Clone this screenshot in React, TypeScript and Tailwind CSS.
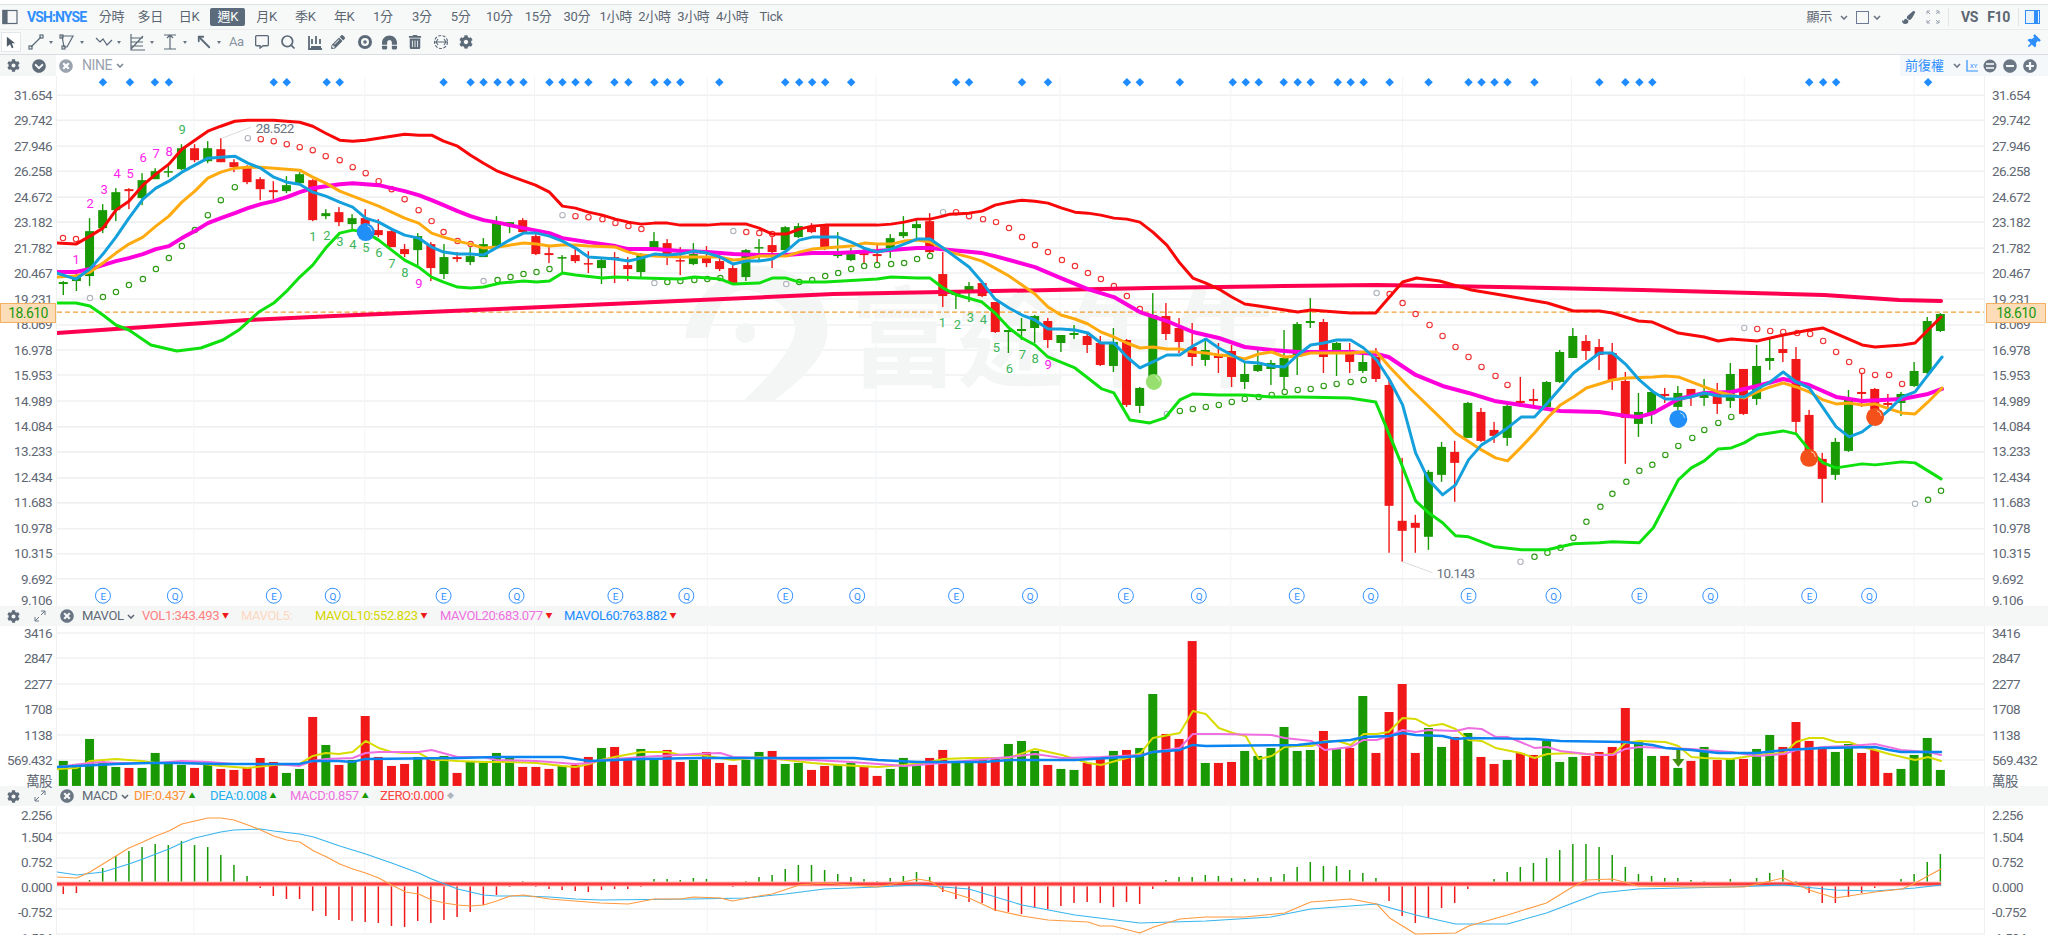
import { ReactNode } from "react";
import { Search, MoveUpLeft } from "lucide-react";
import {
  FaCog,
  FaTimesCircle,
  FaThumbtack,
  FaPaintBrush,
  FaPlusCircle,
  FaMinusCircle,
  FaTrashAlt,
  FaMagnet,
  FaRegCommentAlt,
  FaPencilAlt,
  FaChevronCircleDown,
} from "react-icons/fa";

// [green?, wick top, body top, body bottom, wick bottom], page y pixels
const candles: number[][] = [
  [1,281,282,284,295],[1,273,277,281,291],[1,218,231,276,286],[1,204,210,228,233],[1,188,192,210,221],[0,188,189,191,209],[1,173,180,198,205],[1,168,171,179,179],[1,165,171,172,177],[1,144,148,169,170],
  [0,144,148,160,162],[1,141,148,161,163],[0,138,149,162,162],[0,159,162,167,172],[0,165,167,182,184],[0,177,179,189,200],[0,181,190,192,199],[1,176,185,191,193],[1,172,174,183,183],[0,179,180,220,221],
  [1,209,213,216,219],[0,207,212,222,226],[1,214,218,224,229],[0,209,218,227,230],[0,219,230,235,237],[0,230,231,247,247],[0,244,249,254,257],[1,233,236,250,265],[0,242,244,268,281],[1,244,257,274,279],
  [0,252,257,259,262],[1,247,256,262,265],[1,238,244,257,257],[1,216,222,246,246],[1,222,222,224,233],[0,218,220,232,234],[0,233,236,254,255],[0,247,253,255,263],[1,255,257,258,272],[0,248,255,261,263],
  [0,251,263,264,273],[1,258,260,268,284],[0,252,257,259,283],[0,257,265,269,281],[1,253,255,272,277],[1,232,241,249,250],[0,239,243,256,265],[0,247,260,261,275],[1,243,254,264,265],[0,246,257,263,267],
  [0,255,261,269,271],[0,265,268,283,283],[1,249,250,277,281],[1,239,247,248,260],[0,237,245,252,268],[1,226,227,250,250],[1,223,226,237,238],[0,223,226,232,233],[0,225,226,248,250],[1,232,254,256,258],
  [1,248,254,260,261],[0,247,253,255,265],[0,243,254,256,264],[1,234,238,248,258],[1,216,232,236,238],[1,220,224,228,239],[0,213,221,252,253],[0,252,274,296,307],[1,292,293,295,309],[1,282,286,290,302],
  [0,283,283,296,297],[0,302,302,332,333],[1,330,330,332,353],[1,318,329,331,340],[1,315,316,328,343],[0,318,321,340,348],[1,335,335,343,352],[1,325,333,335,339],[0,332,336,345,353],[0,336,343,365,366],
  [1,328,342,366,372],[0,339,340,405,407],[1,387,388,406,413],[1,293,315,377,380],[0,303,316,334,340],[0,318,328,342,353],[0,323,347,357,366],[1,338,350,360,366],[0,343,356,358,373],[0,345,351,377,387],
  [1,363,374,382,389],[1,347,365,371,372],[1,360,363,369,385],[1,330,358,377,390],[1,322,324,357,375],[1,298,321,323,328],[0,319,322,357,373],[1,342,343,352,376],[0,343,350,362,373],[1,352,362,371,373],
  [0,348,357,379,382],[0,377,385,506,553],[0,458,521,531,562],[0,515,523,528,553],[1,470,472,537,550],[1,442,447,475,482],[0,441,452,463,502],[1,402,403,438,438],[0,408,412,441,442],[0,422,430,436,443],
  [1,403,406,438,446],[0,377,401,403,407],[0,389,399,401,406],[1,381,382,407,407],[1,350,352,382,383],[1,328,336,358,358],[0,335,341,351,360],[0,339,347,355,370],[0,343,353,380,390],[0,372,381,418,464],
  [1,393,412,424,437],[1,391,392,414,424],[0,388,394,396,403],[1,386,393,407,410],[0,389,389,397,406],[1,379,393,398,406],[0,383,393,404,414],[1,363,374,401,408],[0,369,369,414,415],[1,345,366,399,405],
  [1,339,358,361,370],[0,335,349,353,362],[0,347,359,422,433],[0,410,415,460,460],[0,453,459,479,503],[1,438,442,475,480],[1,390,400,451,452],[0,370,392,394,407],[0,388,389,413,423],[0,394,403,405,412],
  [1,392,394,403,416],[1,362,371,386,387],[1,317,321,373,374],[1,313,314,331,332],
];

const volTops = [
  761,764,739,763,767,768,768,753,763,765,768,765,769,770,767,758,762,773,769,717,745,765,760,716,757,766,764,757,758,756,
  773,762,763,753,758,767,767,769,766,765,757,748,747,760,749,760,750,762,760,752,
  763,765,760,752,751,764,763,770,766,765,763,766,776,769,758,761,758,750,761,762,759,759,744,741,751,765,769,770,763,758,751,750,748,694,734,739,641,763,763,762,751,756,748,727,751,750,731,749,748,696,753,712,
  684,753,728,747,737,733,757,764,760,753,755,741,762,757,756,752,747,708,742,756,756,768,761,747,760,759,759,749,735,747,722,741,748,752,744,753,750,773,769,755,738,770,
];

const macdTops = [
  894,893,880,868,856,851,847,844,845,841,845,847,855,865,876,888,896,899,899,911,916,920,921,922,923,926,927,921,923,920,917,912,905,895,887,881,887,889,890,891,892,
  890,889,889,887,879,879,880,878,879,882,887,881,877,875,869,865,865,870,874,877,879,881,878,876,872,877,892,899,902,903,911,912,914,908,909,906,903,902,903,907,902,904,889,880,877,877,875,876,878,879,878,877,874,867,862,866,866,870,873,878,901,916,923,918,908,903,889,885,879,872,867,863,858,850,844,844,847,855,867,874,876,878,878,880,881,883,879,884,878,873,870,881,893,903,903,897,893,888,883,879,874,862,854,
];

const candleX = (i: number) => 62.3 + 13.14 * i;

const lineRed = "56,243 75,244 89,236 102,228 115,210 128,201 142,185 155,174 168,164 181,149 194,140 207,131 220,126 234,121 247,120 273,120 299,122 312,126 325,133 339,140 352,141 365,140 378,138 391,136 404,134 418,135 431,135 443,141 457,146 470,155 483,163 497,171 510,176 535,185 549,192 562,206 575,208 588,212 602,215 615,219 628,222 641,224 654,223 667,223 680,225 707,225 720,224 733,224 746,224 759,228 772,234 786,234 799,229 812,226 825,225 877,225 891,224 904,222 917,219 930,219 943,216 950,214 969,213 982,211 995,205 1009,202 1022,200 1035,201 1048,203 1062,208 1075,212 1088,213 1101,215 1114,218 1127,219 1140,222 1153,232 1167,245 1180,263 1193,278 1206,283 1219,289 1232,297 1245,304 1259,306 1272,308 1285,310 1298,312 1311,310 1324,311 1337,312 1351,313 1364,313 1376,313 1389,298 1403,282 1417,278 1440,281 1472,290 1508,296 1548,303 1574,311 1600,311 1613,313 1639,321 1653,322 1679,333 1705,337 1719,341 1732,339 1758,341 1784,335 1810,330 1824,328 1863,345 1876,347 1903,345 1916,343 1942,317";
const lineBlue = "56,273 75,279 89,269 102,254 115,237 128,218 142,199 155,188 168,181 181,172 194,165 207,158 220,157 234,156 247,163 260,168 273,177 286,182 299,184 312,192 325,196 339,202 352,207 365,218 378,222 391,229 404,235 418,238 431,247 443,252 457,254 470,254 483,255 497,247 509,240 523,233 536,233 549,236 562,241 575,248 588,257 602,258 615,259 628,261 641,258 654,254 667,255 680,254 694,251 707,253 720,257 733,264 746,261 759,261 772,259 786,251 799,240 812,237 825,237 838,237 851,242 864,248 877,252 891,249 904,244 917,239 930,239 943,248 950,253 969,267 982,282 995,299 1009,308 1022,315 1035,320 1048,329 1061,329 1075,330 1088,333 1101,343 1114,343 1127,357 1140,368 1153,362 1167,355 1180,355 1193,346 1206,339 1219,348 1232,355 1245,362 1259,363 1272,366 1285,367 1298,355 1311,345 1324,343 1337,340 1351,340 1364,348 1377,360 1390,380 1403,405 1416,453 1429,480 1443,495 1456,485 1469,460 1482,445 1495,437 1508,428 1522,417 1535,417 1548,403 1561,388 1574,373 1587,363 1600,353 1613,353 1627,365 1640,380 1654,392 1666,399 1679,399 1692,397 1705,393 1719,396 1732,396 1745,397 1758,389 1771,382 1784,372 1797,382 1810,388 1824,408 1837,427 1850,437 1863,432 1876,422 1890,410 1903,397 1916,392 1929,375 1943,357";
const lineOrange = "56,277 75,276 89,272 102,263 115,253 128,244 142,237 155,226 168,216 181,202 194,191 207,178 220,172 234,168 247,167 260,167 273,168 286,169 299,170 312,177 325,183 339,191 352,196 365,201 378,206 391,212 404,218 418,223 431,233 443,237 457,241 470,244 483,248 497,247 510,245 523,243 536,244 549,246 562,245 575,245 588,246 615,247 628,252 641,255 654,256 680,257 707,257 720,257 733,260 746,259 759,256 772,256 786,256 799,252 812,249 838,247 851,246 864,243 877,244 891,244 904,241 917,240 930,242 943,248 950,252 969,257 982,261 995,268 1009,276 1022,285 1035,294 1048,307 1061,315 1075,319 1088,324 1101,332 1114,337 1127,343 1140,348 1153,347 1167,349 1180,349 1193,352 1206,353 1219,355 1232,356 1245,359 1259,354 1272,352 1285,357 1298,356 1311,353 1324,353 1351,353 1364,352 1377,352 1390,367 1410,388 1443,420 1456,433 1482,450 1496,458 1508,461 1522,447 1535,433 1548,418 1561,405 1574,397 1587,388 1600,384 1613,380 1627,378 1654,377 1666,376 1679,377 1692,382 1705,387 1719,392 1732,395 1745,398 1758,392 1771,387 1784,383 1797,387 1810,392 1824,400 1837,404 1850,403 1863,405 1876,404 1890,409 1903,413 1916,414 1929,402 1943,388";
const lineMagenta = "56,272 75,272 89,269 102,265 115,261 128,258 142,254 155,249 168,246 181,238 194,231 207,223 220,218 234,213 247,208 260,204 273,201 286,197 299,192 312,188 325,186 339,184 352,183 365,184 378,185 391,188 404,191 418,195 431,200 443,205 457,211 470,216 483,220 500,223 523,228 549,233 562,238 588,242 615,246 628,249 654,249 680,251 707,252 733,254 759,255 786,255 812,253 838,253 877,251 917,248 930,248 950,250 982,253 995,256 1035,267 1061,278 1088,289 1114,297 1140,312 1167,321 1193,332 1219,338 1245,347 1272,350 1298,352 1324,352 1351,352 1377,354 1389,357 1416,375 1443,386 1469,393 1495,401 1535,407 1561,411 1600,412 1627,416 1640,417 1654,413 1679,399 1705,393 1732,392 1758,386 1784,379 1810,385 1837,397 1863,401 1903,399 1929,394 1943,389";
const lineGreen = "56,303 75,303 89,306 102,315 115,325 128,330 150,345 176,351 200,348 222,340 238,330 258,312 273,303 287,290 299,277 312,265 325,248 339,233 352,230 365,232 378,240 391,250 404,260 418,267 431,277 443,282 457,287 470,288 483,287 500,283 523,281 536,282 549,281 562,273 575,275 602,278 615,277 641,278 680,279 694,277 720,279 733,284 759,283 772,278 786,278 799,282 825,282 877,279 891,277 917,278 930,278 943,288 957,295 982,302 995,313 1009,328 1022,338 1035,345 1048,357 1075,368 1088,378 1102,389 1114,393 1130,420 1150,423 1165,418 1180,400 1193,394 1219,395 1245,395 1272,397 1300,397 1350,398 1376,402 1389,433 1403,467 1416,501 1429,513 1443,523 1456,536 1469,537 1482,542 1495,547 1522,550 1548,550 1561,547 1574,544 1600,543 1613,542 1640,543 1654,528 1666,505 1679,480 1692,468 1705,461 1719,449 1732,448 1745,443 1758,435 1784,431 1797,434 1810,450 1824,463 1837,468 1863,464 1876,465 1903,462 1916,463 1942,479";
const lineCrimson = "56,333 100,330 247,320 333,316 520,308 700,300 833,294 943,292 1150,288 1283,286 1377,285 1500,287 1643,290 1825,295 1900,300 1942,301";

const volYellow = "56,769 76,768 89,761 115,759 141,761 155,763 194,763 220,766 247,768 273,765 299,764 312,756 325,753 338,754 352,752 365,741 378,748 391,752 404,753 418,753 431,760 443,760 457,761 483,762 510,762 536,763 562,766 575,767 589,764 601,760 614,757 641,752 667,752 680,755 700,755 733,760 759,757 812,763 838,765 878,767 904,765 930,762 943,759 970,758 1009,758 1035,749 1062,755 1088,763 1101,765 1127,758 1141,753 1153,738 1180,733 1193,711 1206,714 1219,728 1233,733 1246,736 1259,759 1272,756 1285,747 1298,746 1312,746 1325,741 1338,741 1351,745 1364,734 1377,734 1389,732 1403,718 1416,719 1429,726 1443,724 1456,729 1469,740 1482,741 1496,748 1521,753 1535,758 1548,754 1574,753 1600,755 1614,754 1626,743 1640,741 1666,742 1679,746 1692,757 1705,758 1732,759 1758,755 1785,753 1797,742 1810,738 1824,738 1837,742 1850,742 1863,747 1876,750 1890,754 1916,760 1929,757 1942,761";
const volPink = "56,767 89,763 102,762 115,763 155,763 181,761 208,762 234,764 273,764 299,766 312,761 325,759 352,758 365,753 378,752 418,752 431,750 457,757 483,757 496,760 536,761 575,764 589,763 601,760 641,757 693,754 720,753 733,757 812,760 851,762 904,766 943,763 1009,757 1035,754 1062,758 1101,757 1141,755 1153,752 1180,748 1193,734 1219,734 1272,735 1285,738 1312,741 1325,750 1351,747 1364,740 1377,740 1390,736 1403,730 1416,732 1429,730 1456,731 1469,728 1482,729 1496,737 1508,737 1521,742 1535,748 1548,747 1561,751 1587,754 1600,755 1614,755 1626,749 1640,747 1666,748 1692,749 1732,752 1758,756 1785,754 1797,750 1824,747 1850,746 1876,744 1902,750 1929,752 1942,755";
const volBlue = "56,767 115,764 148,763 174,763 220,764 299,764 312,761 338,761 352,762 365,759 457,758 496,757 562,757 589,761 641,759 700,758 854,758 878,760 917,762 983,762 1009,760 1075,760 1141,756 1153,752 1180,750 1193,745 1206,746 1298,745 1325,742 1351,740 1364,737 1390,736 1403,733 1416,735 1443,736 1456,739 1469,738 1535,739 1561,741 1626,742 1653,745 1666,748 1692,750 1719,753 1758,753 1785,750 1824,748 1876,747 1890,750 1902,752 1942,752";

const macdOrange = "56,877 76,878 89,872 102,864 115,856 128,848 142,842 155,836 168,831 181,824 194,821 207,818 220,818 233,820 247,825 260,830 273,836 286,840 299,842 313,851 326,857 339,864 352,869 365,873 378,878 391,885 405,892 418,894 431,900 444,903 457,905 470,906 483,905 496,901 510,896 523,895 536,897 549,899 574,901 600,903 628,904 654,899 680,899 693,897 720,898 732,901 759,896 772,894 799,885 824,883 864,886 877,887 903,882 917,879 930,881 943,890 969,898 995,910 1022,916 1048,920 1088,922 1100,926 1113,926 1140,933 1154,927 1180,919 1206,917 1245,917 1285,913 1311,902 1351,899 1377,904 1390,918 1416,934 1456,933 1469,926 1508,915 1547,903 1573,887 1587,880 1613,879 1639,886 1691,887 1745,887 1784,878 1810,890 1836,898 1876,892 1903,889 1916,883 1942,869";
const macdBlue = "56,872 76,875 102,872 115,868 128,864 142,859 155,854 168,849 181,843 194,838 207,835 220,832 233,830 260,829 273,831 299,834 313,837 339,846 365,854 391,863 418,873 431,879 444,884 457,889 470,892 483,895 496,896 523,896 549,897 575,899 600,900 692,899 745,898 785,894 824,889 877,887 917,885 969,889 1022,905 1075,915 1140,923 1206,921 1271,917 1311,909 1377,904 1416,915 1456,924 1508,924 1547,913 1600,893 1639,889 1731,887 1784,885 1836,890 1876,891 1916,888 1942,885";

// SAR dots, 0 gray / 1 green / 2 red
const sar: number[][] = [
  [62,238,2],[75,239,2],[89,298,0],[102,297,1],[115,292,1],[128,285,1],[142,279,1],[155,269,1],[168,258,1],[181,246,1],[194,230,1],[207,215,1],[220,200,1],[234,187,1],
  [247,138,0],[260,139,2],[273,141,2],[286,144,2],[299,147,2],[312,150,2],[325,156,2],[339,160,2],[352,167,2],[365,173,2],[378,181,2],[391,189,2],[404,199,2],[418,210,2],[431,221,2],[443,232,2],[457,241,2],[470,244,2],
  [483,281,0],[497,280,1],[510,277,1],[523,274,1],[536,272,1],[549,269,1],[562,215,0],[575,216,2],[588,217,2],[602,219,2],[615,223,2],[628,226,2],[641,229,2],
  [654,283,0],[667,282,1],[680,281,1],[694,280,1],[707,279,1],[720,278,1],[733,231,0],[746,232,2],[759,233,2],[772,234,2],
  [786,284,0],[799,282,1],[812,280,1],[825,276,1],[838,273,1],[851,269,1],[864,266,1],[877,265,1],[891,264,1],[904,263,1],[917,259,1],[930,256,1],
  [943,212,0],[956,212,2],[969,216,2],[983,219,2],[996,222,2],[1009,228,2],[1022,237,2],[1035,245,2],[1048,252,2],[1062,260,2],[1075,266,2],[1088,273,2],[1101,279,2],[1114,286,2],[1127,296,2],[1140,309,2],
  [1167,414,0],[1180,411,1],[1193,409,1],[1206,407,1],[1219,405,1],[1232,402,1],[1245,399,1],[1259,397,1],[1272,395,1],[1285,392,1],[1298,390,1],[1311,389,1],[1324,386,1],[1337,384,1],[1351,382,1],[1364,380,1],
  [1377,293,0],[1390,294,2],[1403,303,2],[1416,314,2],[1430,325,2],[1443,336,2],[1456,347,2],[1469,357,2],[1482,367,2],[1496,376,2],[1508,385,2],
  [1521,562,0],[1535,557,1],[1548,553,1],[1561,548,1],[1574,538,1],[1587,522,1],[1601,507,1],[1613,494,1],[1627,482,1],[1640,471,1],[1653,465,1],[1666,455,1],[1679,446,1],[1693,438,1],[1705,430,1],[1719,423,1],[1732,417,1],
  [1745,328,0],[1758,329,2],[1771,331,2],[1784,332,2],[1798,333,2],[1811,334,2],[1824,341,2],[1837,352,2],[1850,362,2],[1863,371,2],[1876,375,2],[1890,375,2],[1903,384,2],
  [1916,504,0],[1929,500,1],[1942,491,1],
];
const sarColor = ["#b0b4bc", "#2a9a10", "#f03030"];

const diamonds = [102,129,154,168,273,286,326,339,443,470,483,497,510,523,549,562,575,588,614,628,654,667,680,719,785,799,812,825,851,956,969,1022,1048,1127,1140,1180,1233,1246,1259,1284,1298,1311,1338,1351,1364,1390,1429,1469,1482,1495,1508,1535,1600,1626,1640,1653,1810,1824,1837,1929];

const events: [number, string][] = [[102,"E"],[174,"Q"],[273,"E"],[332,"Q"],[443,"E"],[516,"Q"],[615,"E"],[686,"Q"],[785,"E"],[857,"Q"],[956,"E"],[1030,"Q"],[1126,"E"],[1199,"Q"],[1297,"E"],[1371,"Q"],[1469,"E"],[1554,"Q"],[1640,"E"],[1711,"Q"],[1810,"E"],[1870,"Q"]];

const tdLabels: [number, number, string, string][] = [
  [75,259,"1","#ff22ee"],[89,203,"2","#ff22ee"],[103,189,"3","#ff22ee"],[116,173,"4","#ff22ee"],[129,173,"5","#ff22ee"],[142,157,"6","#ff22ee"],[155,153,"7","#ff22ee"],[168,151,"8","#ff22ee"],[181,129,"9","#3cb55a"],
  [312,236,"1","#3cb55a"],[326,235,"2","#3cb55a"],[339,241,"3","#3cb55a"],[352,244,"4","#3cb55a"],[365,247,"5","#3cb55a"],[378,252,"6","#3cb55a"],[391,263,"7","#3cb55a"],[404,272,"8","#3cb55a"],[418,283,"9","#ff22ee"],
  [942,322,"1","#3cb55a"],[957,324,"2","#3cb55a"],[970,317,"3","#3cb55a"],[983,319,"4","#3cb55a"],[996,347,"5","#3cb55a"],[1009,368,"6","#3cb55a"],[1022,354,"7","#3cb55a"],[1035,358,"8","#3cb55a"],[1048,364,"9","#ff22ee"],
];

const balls: [number, number, string, number][] = [
  [365,232,"#2090f8",9],[1154,382,"#97e070",8],[1679,419,"#2090f8",9],[1810,458,"#f4501a",9],[1876,417,"#f4501a",9],
];

const vGrid = [193,364,534,707,876,1060,1231,1403,1572,1745,1915];
const mainGrid = [95,120,146,171,197,222,248,273,299,325,350,375,401,427,452,478,503,529,554,579];
const mainLabels = ["31.654","29.742","27.946","26.258","24.672","23.182","21.782","20.467","19.231","18.069","16.978","15.953","14.989","14.084","13.233","12.434","11.683","10.978","10.315","9.692"];
const volLabels = ["3416","2847","2277","1708","1138","569.432"];
const macdLabels = ["1.504","0.752","0.000","-0.752","-1.504"];

function Chevron({ className = "" }: { className?: string }) {
  return (
    <svg viewBox="0 0 8 5" className={`w-2 h-[5px] ${className}`} fill="none" stroke="currentColor" strokeWidth="1.6">
      <path d="M1 1l3 3 3-3" />
    </svg>
  );
}

function Caret() {
  return <span className="ml-[4px] w-0 h-0 border-x-[2.5px] border-x-transparent border-t-[3px] border-t-[#6b7684]" />;
}

function Glyph({ children }: { children: ReactNode }) {
  return (
    <svg viewBox="0 0 18 18" className="w-[18px] h-[18px] text-[#5c6a78]" fill="none" stroke="currentColor" strokeWidth="1.2">
      {children}
    </svg>
  );
}

function ExpandIcon() {
  return (
    <svg viewBox="0 0 12 12" className="w-3 h-3 text-[#6b7684]" fill="none" stroke="currentColor" strokeWidth="1">
      <path d="M7 1h4v4M11 1L7 5M5 11H1V7M1 11l4-4" />
    </svg>
  );
}

function PaneHeader({ children }: { children: ReactNode }) {
  return (
    <div className="h-[20px] bg-[#f5f7f7] flex items-center text-[13px] tracking-[-0.4px]">
      <span className="w-[26px] flex justify-center text-[#5f6b78]"><FaCog size={13} /></span>
      <span className="w-[28px] flex justify-center"><ExpandIcon /></span>
      <span className="w-[26px] flex justify-center text-[#6b7684]"><FaTimesCircle size={14} /></span>
      <span className="w-[2px]" />
      {children}
    </div>
  );
}

function Legend({ width, color, text, mark, markColor }: { width: string; color: string; text: string; mark?: string; markColor?: string }) {
  return (
    <span className={`flex items-center gap-[3px] ${width} ${color}`}>
      {text}
      {mark && <span className={`text-[7px] ${markColor}`}>{mark}</span>}
    </span>
  );
}

function Tool({ width, chevron, children }: { width: string; chevron?: boolean; children: ReactNode }) {
  return (
    <span className={`flex items-center shrink-0 text-[#5c6a78] ${width}`}>
      {children}
      {chevron && <Caret />}
    </span>
  );
}

function Tab({ label, active }: { label: string; active?: boolean }) {
  return (
    <span className="w-[38.8px] flex justify-center">
      <span className={`h-[18px] flex items-center justify-center rounded-[2px] ${active ? "w-[35px] bg-[#5b6b7b] text-white" : "text-[#5c6672]"}`}>
        {label}
      </span>
    </span>
  );
}

function AxisLabel({ text, height, className = "" }: { text: string; height: string; className?: string }) {
  return <div className={`flex items-center ${height} ${className}`}>{text}</div>;
}

function GridLines({ rows, top, bottom }: { rows: number[]; top: number; bottom: number }) {
  return (
    <g>
      {rows.map((y) => <line key={y} x1="56" x2="1985" y1={y} y2={y} stroke="#eff0f2" strokeWidth="1.6" />)}
      {vGrid.map((x) => <line key={x} x1={x} x2={x} y1={top} y2={bottom} stroke="#f3f4f6" strokeWidth="1" />)}
    </g>
  );
}

function Poly({ points, color, width }: { points: string; color: string; width: number }) {
  return <polyline points={points} fill="none" stroke={color} strokeWidth={width} strokeLinejoin="round" strokeLinecap="round" />;
}

function MainChart() {
  return (
    <svg viewBox="56 76 1929 530" className="w-[1929px] h-[530px] block border-x border-[#eef0f2]">
      <GridLines rows={mainGrid} top={76} bottom={606} />
      <g fill="#f4f5f5">
        <path d="M685 338C690 290 735 262 765 266 805 270 830 300 827 335 825 360 795 385 772 402L742 402C765 380 792 352 795 330 796 312 770 292 745 290 725 290 714 312 708 338Z" />
        <circle cx="745" cy="333" r="10" />
        <text x="850" y="378" fontSize="108" fontFamily="'Noto Sans CJK TC',sans-serif" fontWeight="700">富途牛牛</text>
      </g>
      {diamonds.map((x) => <rect key={x} x={x - 3} y={79} width="6" height="6" fill="#1e8cff" transform={`rotate(45 ${x} 82)`} />)}
      <line x1="56" x2="1985" y1="312" y2="312" stroke="#f2a030" strokeWidth="1.2" strokeDasharray="5 3" />
      {candles.map(([up, wt, bt, bb, wb], i) => {
        const x = candleX(i);
        const color = up ? "#199a05" : "#f01818";
        return (
          <g key={i} fill={color}>
            <rect x={x - 0.7} y={wt} width="1.4" height={wb - wt} />
            <rect x={x - 4.5} y={bt} width="9" height={Math.max(bb - bt, 1.5)} />
          </g>
        );
      })}
      {sar.map(([x, y, c], i) => <circle key={i} cx={x} cy={y} r="2.7" fill="#fff" stroke={sarColor[c]} strokeWidth="1.1" />)}
      <Poly points={lineCrimson} color="#ff0050" width={4} />
      <Poly points={lineGreen} color="#0ee00e" width={3} />
      <Poly points={lineMagenta} color="#ff00dc" width={4} />
      <Poly points={lineOrange} color="#ffab0f" width={3} />
      <Poly points={lineBlue} color="#14a0dc" width={3} />
      <Poly points={lineRed} color="#f80808" width={3} />
      {tdLabels.map(([x, y, t, c], i) => <text key={i} x={x} y={y + 5} fontSize="13" textAnchor="middle" fill={c}>{t}</text>)}
      {balls.map(([x, y, c, r]) => (
        <g key={x}>
          <circle cx={x} cy={y} r={r} fill={c} />
          <path d={`M${x + r * 0.2} ${y - r * 0.7}A${r * 0.7} ${r * 0.7} 0 0 1 ${x + r * 0.7} ${y - r * 0.1}`} fill="none" stroke="#fff" strokeOpacity="0.7" strokeWidth="1" />
        </g>
      ))}
      <line x1="221" y1="138" x2="250" y2="127" stroke="#d8dadd" strokeWidth="1" />
      <text x="255" y="133" fontSize="13.5" letterSpacing="-0.6" fill="#6b7480">28.522</text>
      <line x1="1403" y1="562" x2="1433" y2="573" stroke="#d8dadd" strokeWidth="1" />
      <text x="1437" y="578" fontSize="13.5" letterSpacing="-0.6" fill="#6b7480">10.143</text>
      {events.map(([x, t]) => (
        <g key={x}>
          <circle cx={x} cy={596} r="7.5" fill="#fff" stroke="#2f8fff" strokeWidth="1" />
          <text x={x} y={600} fontSize="10" textAnchor="middle" fill="#2f8fff">{t}</text>
        </g>
      ))}
    </svg>
  );
}

function VolumeChart() {
  return (
    <svg viewBox="56 626 1929 160" className="w-[1929px] h-[160px] block border-x border-[#eef0f2]">
      <GridLines rows={[633,658,684,709,735,760]} top={626} bottom={786} />
      {volTops.map((top, i) => (
        <rect key={i} x={candleX(i) - 4.5} y={top} width="9" height={786 - top} fill={candles[i][0] ? "#199a05" : "#f01818"} />
      ))}
      <Poly points={volYellow} color="#d8dc00" width={2} />
      <Poly points={volPink} color="#ee70e0" width={2} />
      <Poly points={volBlue} color="#0a84f0" width={2.4} />
      <path d="M1677 750h4v9h4l-6 8-6-8h4z" fill="#3f8f10" />
    </svg>
  );
}

function MacdChart() {
  return (
    <svg viewBox="56 806 1929 129" className="w-[1929px] h-[129px] block border-x border-[#eef0f2]">
      <GridLines rows={[833,858,909,934]} top={806} bottom={935} />
      {macdTops.map((y, i) => {
        const up = y < 884;
        return (
          <rect key={i} x={candleX(i) - 0.75} y={up ? y : 884} width="1.5" height={Math.abs(y - 884)} fill={up ? "#199a05" : "#f01818"} />
        );
      })}
      <rect x="56" y="881.5" width="1886" height="5" fill="#ffc8c8" />
      <rect x="56" y="882.5" width="1886" height="3" fill="#ff3c3c" />
      <Poly points={macdBlue} color="#38b4ec" width={1.1} />
      <Poly points={macdOrange} color="#ff9a40" width={1.1} />
    </svg>
  );
}

const tabs = ["分時","多日","日K","週K","月K","季K","年K","1分","3分","5分","10分","15分","30分","1小時","2小時","3小時","4小時","Tick"];

export default function App() {
  return (
    <div className="w-[2048px] h-[935px] overflow-hidden bg-white text-[#5f6874] font-[Roboto,'Noto_Sans_CJK_TC',sans-serif]">
      <div className="h-[5px] bg-white border-b border-[#dfe2e5]" />
      {/* period tabs */}
      <div className="h-[25px] bg-[#f7f9f9] border-b border-[#e9ebed] flex items-center text-[13px] tracking-[-0.3px]">
        <svg viewBox="0 0 16 16" className="w-4 h-4 ml-[2px] text-[#5c6a78]" fill="none" stroke="currentColor" strokeWidth="1.2">
          <rect x="1" y="1.5" width="14" height="13" />
          <rect x="1" y="1.5" width="4" height="13" fill="currentColor" />
        </svg>
        <span className="ml-[9px] w-[65px] font-bold text-[14px] text-[#2f8fff] tracking-[-0.9px]">VSH:NYSE</span>
        {tabs.map((t) => <Tab key={t} label={t} active={t === "週K"} />)}
        <div className="ml-auto flex items-center h-full">
          <span>顯示</span>
          <Chevron className="ml-[8px] text-[#6b7684]" />
          <span className="ml-[8px] w-[13px] h-[13px] border border-[#6c7a96]" />
          <Chevron className="ml-[4px] text-[#6b7684]" />
          <span className="ml-[21px] text-[#5c6a78]"><FaPaintBrush size={13} /></span>
          <svg viewBox="0 0 14 14" className="ml-[11px] w-[14px] h-[14px] text-[#9aa3ae]" fill="none" stroke="currentColor" strokeWidth="1">
            <path d="M1 4V1h3M10 1h3v3M1 10v3h3M13 10v3h-3M1 1l3 3M13 1l-3 3M1 13l3-3M13 13l-3-3" />
          </svg>
          <span className="ml-[8px] w-px h-[18px] bg-[#e2e5e8]" />
          <span className="ml-[12px] font-bold text-[14px] text-[#5c6672]">VS</span>
          <span className="ml-[9px] font-bold text-[14px] text-[#5c6672]">F10</span>
          <span className="ml-[8px] w-px h-[18px] bg-[#e2e5e8]" />
          <span className="ml-[6px] mr-[8px] w-[15px] h-[14px] border border-[#2f8fff] flex justify-end bg-[#e8f2fd]">
            <span className="w-[4px] mr-[1px] bg-[#2f8fff]" />
          </span>
        </div>
      </div>
      {/* drawing tools */}
      <div className="h-[25px] bg-[#f7f9f9] border-b border-[#d9dde1] flex items-center">
        <span className="w-[20px] h-[20px] ml-px bg-white border border-[#e4e7ea] flex items-center justify-center shrink-0">
          <svg viewBox="0 0 12 14" className="w-[10px] h-[13px] text-[#4d5a68]" fill="currentColor"><path d="M1 0l10 8H7l2 5-2 1-2-5-4 3z" /></svg>
        </span>
        <span className="w-[6px] shrink-0" />
        <Tool width="w-[31px]" chevron><Glyph><path d="M4 14L14 4" /><rect x="2" y="13" width="3" height="3" /><rect x="13" y="2" width="3" height="3" /></Glyph></Tool>
        <Tool width="w-[37px]" chevron><Glyph><path d="M4 3h11L9 14H6z" /><rect x="2" y="2" width="3" height="3" /><rect x="4" y="13" width="3" height="3" /></Glyph></Tool>
        <Tool width="w-[33px]" chevron><Glyph><path d="M1 5l4 4 3-3 4 6 5-5" /></Glyph></Tool>
        <Tool width="w-[33px]" chevron><Glyph><path d="M3 1v16h14M3 5h12M3 9h12M3 13h12M3 16L15 3" /></Glyph></Tool>
        <Tool width="w-[34px]" chevron><Glyph><path d="M3 2h12M3 16h12M9 2v14M6 5l3-3 3 3" /></Glyph></Tool>
        <Tool width="w-[34px]" chevron><MoveUpLeft size={18} strokeWidth={2.4} /></Tool>
        <Tool width="w-[26px]"><span className="text-[13px] tracking-[-0.5px] text-[#8a94a0]">Aa</span></Tool>
        <Tool width="w-[25px]"><FaRegCommentAlt size={14} /></Tool>
        <Tool width="w-[26px]"><Search size={16} strokeWidth={2.6} /></Tool>
        <Tool width="w-[25px]"><Glyph><path d="M3 3v13h13M5 14h10M6 11V6M10 11V3M14 11V6" strokeWidth="1.8" /></Glyph></Tool>
        <Tool width="w-[26px]"><FaPencilAlt size={14} /></Tool>
        <Tool width="w-[25px]"><svg viewBox="0 0 16 16" className="w-4 h-4" fill="none" stroke="currentColor" strokeWidth="3"><circle cx="8" cy="8" r="5.5" /><circle cx="8" cy="8" r="0.8" strokeWidth="2" /></svg></Tool>
        <Tool width="w-[26px]"><span className="rotate-180"><FaMagnet size={15} /></span></Tool>
        <Tool width="w-[25px]"><FaTrashAlt size={14} /></Tool>
        <Tool width="w-[26px]"><svg viewBox="0 0 16 16" className="w-4 h-4" fill="none" stroke="currentColor" strokeWidth="1.1"><circle cx="8" cy="8" r="6.5" strokeDasharray="3 1.5" /><path d="M1 8h14M5 5l-2 3 2 3M11 5l2 3-2 3" /></svg></Tool>
        <Tool width="w-[22px]"><FaCog size={14} /></Tool>
        <span className="ml-auto mr-[8px] text-[#2f8fff] rotate-45"><FaThumbtack size={14} /></span>
      </div>
      {/* indicator row */}
      <div className="h-[21px] flex items-center">
        <div className="w-[56px] h-full bg-[#f5f7f7] flex items-center text-[#5f6b78] shrink-0">
          <span className="w-[26px] flex justify-center"><FaCog size={13} /></span>
          <span className="w-[26px] flex justify-center"><FaChevronCircleDown size={14} /></span>
        </div>
        <span className="ml-[3px] text-[#9aa3ae]"><FaTimesCircle size={14} /></span>
        <span className="ml-[9px] text-[14px] tracking-[-0.4px] text-[#9aa3ae]">NINE</span>
        <Chevron className="ml-[4px] text-[#7d8894]" />
        <div className="ml-auto w-[148px] h-full bg-[#f5f8fa] flex items-center text-[#6b7785]">
          <span className="ml-[5px] text-[13px] text-[#2f8fff]">前復權</span>
          <Chevron className="ml-[9px] text-[#6b7684]" />
          <svg viewBox="0 0 14 14" className="ml-[4px] w-[14px] h-[14px] text-[#2f8fff]" fill="none" stroke="currentColor" strokeWidth="1.2">
            <path d="M2 1v11h11" />
            <text x="5" y="9" fontSize="6" fill="currentColor" stroke="none">XY</text>
          </svg>
          <svg viewBox="0 0 14 14" className="ml-[4px] w-[14px] h-[14px]" fill="currentColor">
            <circle cx="7" cy="7" r="6.5" />
            <path d="M3 5h8M3 9h8" stroke="#fff" strokeWidth="1.4" />
          </svg>
          <span className="ml-[6px]"><FaMinusCircle size={14} /></span>
          <span className="ml-[6px]"><FaPlusCircle size={14} /></span>
        </div>
      </div>
      {/* price pane */}
      <div className="relative h-[530px] flex text-[13.5px] tracking-[-0.6px]">
        <div className="w-[52px] pt-[6.3px] text-right shrink-0">
          {mainLabels.map((l) => <AxisLabel key={l} text={l} height="h-[25.47px]" className="justify-end" />)}
          <AxisLabel text="9.106" height="h-[17px]" className="justify-end" />
        </div>
        <div className="w-[4px] shrink-0" />
        <MainChart />
        <div className="pl-[7px] pt-[6.3px]">
          {mainLabels.map((l) => <AxisLabel key={l} text={l} height="h-[25.47px]" />)}
          <AxisLabel text="9.106" height="h-[17px]" />
        </div>
        <span className="absolute left-0 top-[227px] w-[56px] h-[20px] bg-[#fddcb8] border border-[#f3b060] flex items-center justify-center text-[14px] text-[#209a10]">18.610</span>
        <span className="absolute left-[1986px] top-[227px] w-[60px] h-[20px] bg-[#fddcb8] border border-[#f3b060] flex items-center justify-center text-[14px] text-[#209a10]">18.610</span>
      </div>
      <PaneHeader>
        <span className="flex items-center w-[60px] text-[#5f6874]">MAVOL<Chevron className="ml-[3px]" /></span>
        <Legend width="w-[99px]" color="text-[#ff8080]" text="VOL1:343.493" mark="▼" markColor="text-[#f01818]" />
        <Legend width="w-[74px]" color="text-[#fdd8c0]" text="MAVOL5:" />
        <Legend width="w-[125px]" color="text-[#d6d600]" text="MAVOL10:552.823" mark="▼" markColor="text-[#f01818]" />
        <Legend width="w-[124px]" color="text-[#ee70e0]" text="MAVOL20:683.077" mark="▼" markColor="text-[#f01818]" />
        <Legend width="w-[124px]" color="text-[#1a8cff]" text="MAVOL60:763.882" mark="▼" markColor="text-[#f01818]" />
      </PaneHeader>
      {/* volume pane */}
      <div className="h-[160px] flex text-[13.5px] tracking-[-0.6px]">
        <div className="w-[52px] text-right shrink-0 -mt-[5.6px]">
          {volLabels.map((l) => <AxisLabel key={l} text={l} height="h-[25.4px]" className="justify-end" />)}
          <AxisLabel text="萬股" height="h-[16px]" className="justify-end" />
        </div>
        <div className="w-[4px] shrink-0" />
        <VolumeChart />
        <div className="pl-[7px] -mt-[5.6px]">
          {volLabels.map((l) => <AxisLabel key={l} text={l} height="h-[25.4px]" />)}
          <AxisLabel text="萬股" height="h-[16px]" />
        </div>
      </div>
      <PaneHeader>
        <span className="flex items-center w-[52px] text-[#5f6874]">MACD<Chevron className="ml-[4px]" /></span>
        <Legend width="w-[76px]" color="text-[#ff9030]" text="DIF:0.437" mark="▲" markColor="text-[#199a05]" />
        <Legend width="w-[80px]" color="text-[#20b0f0]" text="DEA:0.008" mark="▲" markColor="text-[#199a05]" />
        <Legend width="w-[90px]" color="text-[#ee70e0]" text="MACD:0.857" mark="▲" markColor="text-[#199a05]" />
        <Legend width="w-[90px]" color="text-[#ff4040]" text="ZERO:0.000" mark="◆" markColor="text-[#b0b4bc]" />
      </PaneHeader>
      {/* macd pane */}
      <div className="h-[129px] flex text-[13.5px] tracking-[-0.6px]">
        <div className="w-[52px] text-right shrink-0">
          <AxisLabel text="2.256" height="h-[18px]" className="justify-end" />
          {macdLabels.map((l) => <AxisLabel key={l} text={l} height="h-[25.3px]" className="justify-end" />)}
        </div>
        <div className="w-[4px] shrink-0" />
        <MacdChart />
        <div className="pl-[7px]">
          <AxisLabel text="2.256" height="h-[18px]" />
          {macdLabels.map((l) => <AxisLabel key={l} text={l} height="h-[25.3px]" />)}
        </div>
      </div>
    </div>
  );
}
